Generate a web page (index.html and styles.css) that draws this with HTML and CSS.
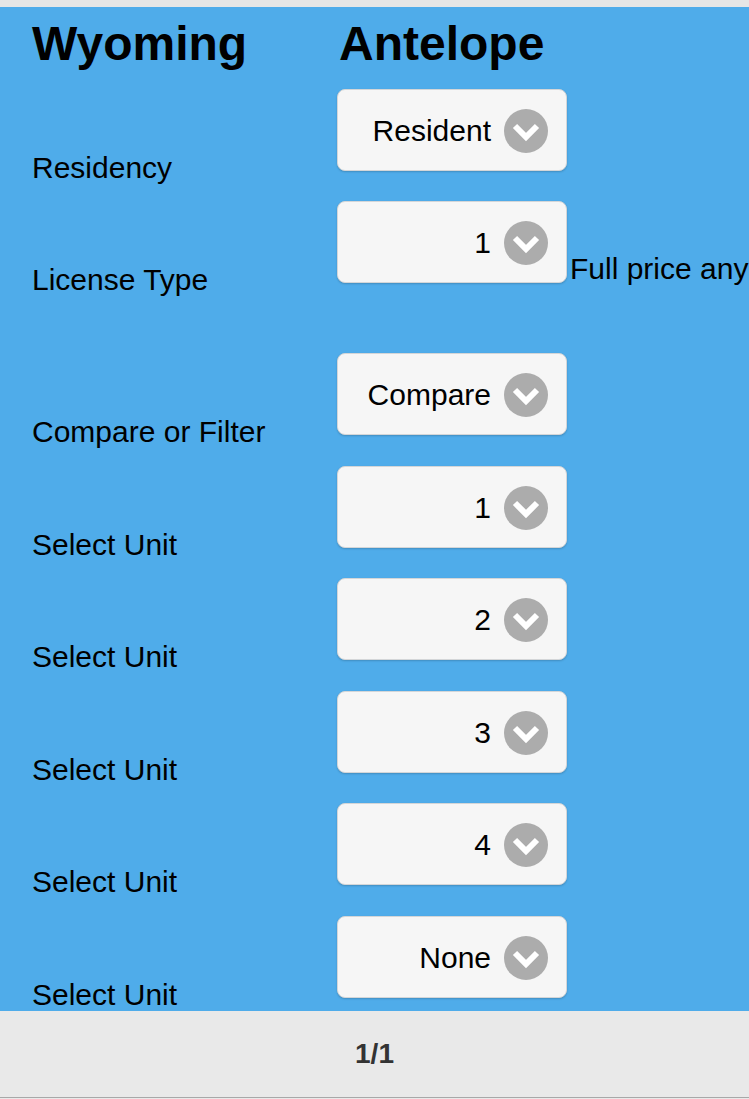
FILE: index.html
```html
<!DOCTYPE html>
<html lang="en">
<head>
<meta charset="utf-8">
<title>Wyoming Antelope</title>
<link rel="stylesheet" href="styles.css">
</head>
<body>
<div class="topbar"></div>
<main class="content">
  <div class="row heading-row">
    <h1 class="label heading">Wyoming</h1>
    <h1 class="heading">Antelope</h1>
  </div>

  <div class="row">
    <div class="label">Residency</div>
    <div class="field">
      <div class="select"><span class="select-text">Resident</span><svg class="chev" viewBox="0 0 44 44"><circle cx="22" cy="22" r="22"/><polyline points="11,17 22,28 33,17"/></svg></div>
    </div>
  </div>

  <div class="row row-note">
    <div class="label">License Type</div>
    <div class="field">
      <div class="select"><span class="select-text">1</span><svg class="chev" viewBox="0 0 44 44"><circle cx="22" cy="22" r="22"/><polyline points="11,17 22,28 33,17"/></svg></div>
      <span class="note">Full price any</span>
    </div>
  </div>

  <div class="row">
    <div class="label">Compare or Filter</div>
    <div class="field">
      <div class="select"><span class="select-text">Compare</span><svg class="chev" viewBox="0 0 44 44"><circle cx="22" cy="22" r="22"/><polyline points="11,17 22,28 33,17"/></svg></div>
    </div>
  </div>

  <div class="row">
    <div class="label">Select Unit</div>
    <div class="field">
      <div class="select"><span class="select-text">1</span><svg class="chev" viewBox="0 0 44 44"><circle cx="22" cy="22" r="22"/><polyline points="11,17 22,28 33,17"/></svg></div>
    </div>
  </div>

  <div class="row">
    <div class="label">Select Unit</div>
    <div class="field">
      <div class="select"><span class="select-text">2</span><svg class="chev" viewBox="0 0 44 44"><circle cx="22" cy="22" r="22"/><polyline points="11,17 22,28 33,17"/></svg></div>
    </div>
  </div>

  <div class="row">
    <div class="label">Select Unit</div>
    <div class="field">
      <div class="select"><span class="select-text">3</span><svg class="chev" viewBox="0 0 44 44"><circle cx="22" cy="22" r="22"/><polyline points="11,17 22,28 33,17"/></svg></div>
    </div>
  </div>

  <div class="row">
    <div class="label">Select Unit</div>
    <div class="field">
      <div class="select"><span class="select-text">4</span><svg class="chev" viewBox="0 0 44 44"><circle cx="22" cy="22" r="22"/><polyline points="11,17 22,28 33,17"/></svg></div>
    </div>
  </div>

  <div class="row">
    <div class="label">Select Unit</div>
    <div class="field">
      <div class="select"><span class="select-text">None</span><svg class="chev" viewBox="0 0 44 44"><circle cx="22" cy="22" r="22"/><polyline points="11,17 22,28 33,17"/></svg></div>
    </div>
  </div>
</main>
<footer class="footer">1/1</footer>
</body>
</html>
```

FILE: styles.css
```css
html, body {
  margin: 0;
  padding: 0;
  overflow: hidden;
}

body {
  width: 749px;
  height: 1099px;
  font-family: "Liberation Sans", Arial, Helvetica, sans-serif;
  color: #000;
  background: #e9e9e9;
}

.topbar {
  height: 7px;
  background: #e6e6e6;
}

.content {
  height: 1004px;
  background: #4facea;
  padding: 9px 0 0 32px;
  box-sizing: border-box;
  overflow: hidden;
  display: flex;
  flex-direction: column;
  gap: 16.5px;
}

.row {
  display: flex;
  align-items: flex-end;
}

.heading-row {
  align-items: baseline;
}

.heading {
  margin: 0;
  font-size: 48px;
  line-height: 56px;
  font-weight: bold;
}

.heading-row .heading:last-child {
  margin-left: 2px;
}

.label {
  width: 305px;
  flex: none;
  font-size: 30px;
  line-height: 34px;
}

.heading.label {
  font-size: 48px;
  line-height: 56px;
}

.row-note {
  margin-bottom: 39.5px;
}

.field {
  display: flex;
  align-items: flex-end;
  flex: none;
}

.select {
  width: 230px;
  height: 82px;
  box-sizing: border-box;
  background: #f6f6f6;
  border: 1px solid #d4d6d8;
  border-radius: 8px;
  box-shadow: 0 1px 2px rgba(0, 0, 0, 0.18);
  display: flex;
  align-items: center;
  justify-content: flex-end;
  padding: 2px 18px 0 0;
  margin-bottom: 14px;
  gap: 13px;
}

.select-text {
  font-size: 30px;
  line-height: 34px;
}

.chev {
  width: 44px;
  height: 44px;
  flex: none;
}

.chev circle {
  fill: #acacac;
}

.chev polyline {
  fill: none;
  stroke: #fff;
  stroke-width: 6;
  stroke-linecap: butt;
  stroke-linejoin: miter;
}

.note {
  font-size: 30px;
  line-height: 34px;
  white-space: nowrap;
  margin-left: 3px;
  margin-bottom: 11px;
}

.footer {
  height: 86px;
  background: #e9e9e9;
  border-bottom: 1px solid #a8a8a8;
  display: flex;
  align-items: center;
  justify-content: center;
  font-size: 28px;
  font-weight: bold;
  color: #333;
}
```
